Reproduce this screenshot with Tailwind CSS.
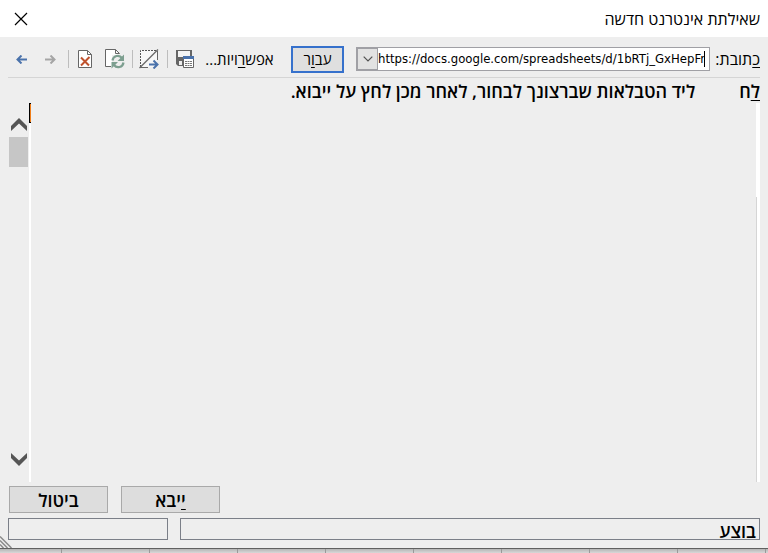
<!DOCTYPE html>
<html lang="he" dir="rtl">
<head>
  <meta charset="UTF-8">
  <meta name="viewport" content="width=device-width, initial-scale=1.0">
  <title>שאילתת אינטרנט חדשה</title>
  <script src="https://cdn.jsdelivr.net/npm/@tailwindcss/browser@4"></script>
</head>
<body class="bg-[#eeeeee] text-black h-screen flex flex-col overflow-hidden font-['Open_Sans','DejaVu_Sans',sans-serif]">
  <header class="bg-white h-[37px] shrink-0 flex items-center justify-between ps-2 pe-[14px]">
    <h1 class="text-base leading-5">שאילתת אינטרנט חדשה</h1>
    <button type="button" aria-label="סגור" class="size-[14px]">
      <svg viewBox="0 0 14 14" class="size-[14px]" fill="none" stroke="#000" stroke-width="1.2"><path d="M1 1l12 12M13 1L1 13"/></svg>
    </button>
  </header>

  <div class="mx-2 h-[41px] shrink-0 border-b border-[#d5d5d5] flex items-center pt-1 text-[15px]">
    <label for="address" class="w-[50px] shrink-0 whitespace-nowrap text-base"><u class="underline-offset-2">כ</u>תובת:</label>
    <div dir="ltr" class="flex-1 min-w-0 h-6 flex border border-[#a0a0a5] bg-white">
      <button type="button" aria-label="כתובות קודמות" class="w-[21px] shrink-0 bg-[#e2e2e2] border border-[#a0a0a5] flex items-center justify-center">
        <svg viewBox="0 0 10 6" class="w-[10px] h-[6px]" fill="none" stroke="#505050" stroke-width="1.2"><path d="M.7.7L5 5 9.300.7"/></svg>
      </button>
      <input id="address" type="text" value="https://docs.google.com/spreadsheets/d/1bRTj_GxHepFr" class="w-full min-w-0 bg-transparent outline-none text-[13px] font-['DejaVu_Sans_Condensed','DejaVu_Sans',sans-serif]">
      <span class="w-px h-4 mt-[3px] me-1 shrink-0 bg-black"></span>
    </div>
    <button type="button" class="ms-3 w-[53px] h-[27px] shrink-0 bg-[#dfdfdf] border-2 border-[#3671cc] flex items-center justify-center"><span>עב<u class="underline-offset-2">ו</u>ר</span></button>
    <button type="button" class="ms-4 w-[71px] shrink-0 whitespace-nowrap">אפש<u class="underline-offset-2">ר</u>ויות...</button>

    <div dir="ltr" class="flex items-center shrink-0 ps-2 pe-[10px]">
      <button type="button" aria-label="הקודם">
        <svg viewBox="0 0 11 9" class="w-[11px] h-[9px]" fill="none" stroke="#4a72ab" stroke-width="2"><path d="M1 4.500H11M5.500.5L1.500 4.500l4 4"/></svg>
      </button>
      <button type="button" aria-label="הבא" class="ms-[18px]">
        <svg viewBox="0 0 11 9" class="w-[11px] h-[9px]" fill="none" stroke="#a5a5a5" stroke-width="2"><path d="M0 4.500h10M5.500.5l4 4-4 4"/></svg>
      </button>
      <span class="w-px h-[18px] bg-[#bdbdbd] ms-3"></span>
      <button type="button" aria-label="עצור" class="ms-[9px]">
        <svg viewBox="0 0 14 18" class="w-[14px] h-[18px]" fill="none"><path d="M.5.5h9l4 4v13H.5z" fill="#fff" stroke="#666"/><path d="M9.500.5v4h4" stroke="#666"/><path d="M3 7.500l8 8M11.500 7L3 15.500" stroke="#c0532e" stroke-width="2"/></svg>
      </button>
      <button type="button" aria-label="רענן" class="ms-[13px]">
        <svg viewBox="0 0 20 20" class="size-5" fill="none"><path d="M.5.5h9l4 4v13H.5z" fill="#fff"/><path d="M6 17.500H.5V.5h10l4 4M10.500.5v4h4" stroke="#666"/><path d="M7 6h12v13H7z" fill="#eee"/><path d="M7.500 11.500a5.300 5.300 0 0 1 9.500-2.500M18.500 13.500a5.300 5.300 0 0 1-9.500 2.500" stroke="#7d9f90" stroke-width="2.200"/><path d="M19 5.500V12h-6.500zM6.500 19.500V13H13z" fill="#7d9f90"/></svg>
      </button>
      <span class="w-px h-[18px] bg-[#bdbdbd] ms-[7px]"></span>
      <button type="button" aria-label="הסתר סמלים" class="ms-[6px]">
        <svg viewBox="0 0 20 20" class="size-5" fill="none"><path d="M1 1h17v17H1z" fill="#f7f7f7"/><path d="M1.500 18V1.500H18" stroke="#555" stroke-dasharray="2 1"/><path d="M18.500 2v9M1 18.500h8" stroke="#666"/><path d="M.5 19L19 .5" stroke="#666" stroke-width="1.300"/><path d="M10 15.500h8M14.500 11.500l4 4-4 4" stroke="#4a72ab" stroke-width="2"/></svg>
      </button>
      <span class="w-px h-[18px] bg-[#bdbdbd] ms-2"></span>
      <button type="button" aria-label="שמור שאילתה" class="ms-2">
        <svg viewBox="0 0 18 18" class="size-[18px]" fill="none"><path d="M0 0h16v7h-9v9H2l-2-2z" fill="#666"/><path d="M2 1h12v6H2z" fill="#f4f4f4"/><path d="M3 11h3v4H3z" fill="#eee"/><path d="M7.500 6.500h10v11h-10z" fill="#fff" stroke="#666"/><path d="M7 6h11v3H7z" fill="#4a72ab"/><path d="M9 11.500h7M9 13.500h7M9 15.500h7" stroke="#777" stroke-dasharray="2 .5"/></svg>
      </button>
    </div>
  </div>

  <p class="mx-2 h-[25px] shrink-0 flex items-center gap-11 text-lg leading-6 font-semibold whitespace-nowrap">
    <span><u class="underline-offset-2 decoration-1">ל</u>ח</span>
    <span>ליד הטבלאות שברצונך לבחור, לאחר מכן לחץ על ייבוא.</span>
  </p>

  <main dir="ltr" class="flex-1 min-h-0 flex ps-[9px] pe-2">
    <div class="w-5 shrink-0 flex flex-col items-center pt-[15px] pb-4">
      <svg viewBox="0 0 18 13" class="w-[18px] h-[13px] shrink-0" fill="#555"><path d="M9 0l8 8v5L9 5.500 1 13V8z"/></svg>
      <div class="w-[19px] h-[30px] mt-[6px] me-px bg-[#c6c6c6]"></div>
      <svg viewBox="0 0 18 13" class="w-[18px] h-[13px] shrink-0 mt-auto" fill="#555"><path d="M9 13l8-8V0L9 7.500 1 0v5z"/></svg>
    </div>
    <div class="w-[2px] shrink-0 bg-white">
      <div class="h-5 bg-[#ef7d18] border-y border-s border-black"></div>
    </div>
    <div class="flex-1"></div>
    <div class="w-1 shrink-0 flex flex-col bg-white">
      <div class="h-[94px] shrink-0"></div>
      <div class="flex-1 border-s border-[#d5d5d5]"></div>
    </div>
  </main>

  <div dir="ltr" class="shrink-0 flex gap-[13px] ps-[9px] pt-1 text-lg leading-6 font-semibold">
    <button type="button" dir="rtl" class="w-[99px] h-[27px] bg-[#dddddd] border border-[#a9a9a9]">ביטול</button>
    <button type="button" dir="rtl" class="w-[99px] h-[27px] bg-[#dddddd] border border-[#a9a9a9]"><u class="underline-offset-2 decoration-1">י</u>יבא</button>
  </div>

  <footer dir="ltr" class="shrink-0 relative flex gap-3 px-2 pt-[5px] pb-2">
    <div class="w-40 h-[22px] border border-[#7b7f88]"></div>
    <div dir="rtl" class="flex-1 h-[22px] border border-[#7b7f88] px-[3px] text-lg leading-6 font-semibold">בוצע</div>
    <svg viewBox="0 0 12 12" class="absolute left-0 bottom-0 size-3" fill="none" stroke="#8b8b8b" stroke-width="1.500"><path d="M0 0.500L11.500 12M0 4.500L7.500 12M0 8.500L3.500 12"/></svg>
  </footer>

  <div dir="ltr" class="h-[5px] shrink-0 flex overflow-hidden border-t border-[#606060] bg-linear-to-b from-[#b5b5b5] to-[#d8d8d8]">
    <span class="w-[62px] shrink-0 border-e border-[#999]"></span>
    <span class="w-[88px] shrink-0 border-e border-[#999]"></span>
    <span class="w-[88px] shrink-0 border-e border-[#999]"></span>
    <span class="w-[88px] shrink-0 border-e border-[#999]"></span>
    <span class="w-[88px] shrink-0 border-e border-[#999]"></span>
    <span class="w-[88px] shrink-0 border-e border-[#999]"></span>
    <span class="w-[88px] shrink-0 border-e border-[#999]"></span>
    <span class="w-[88px] shrink-0 border-e border-[#999]"></span>
    <span class="w-[88px] shrink-0 border-e border-[#999]"></span>
  </div>
</body>
</html>
